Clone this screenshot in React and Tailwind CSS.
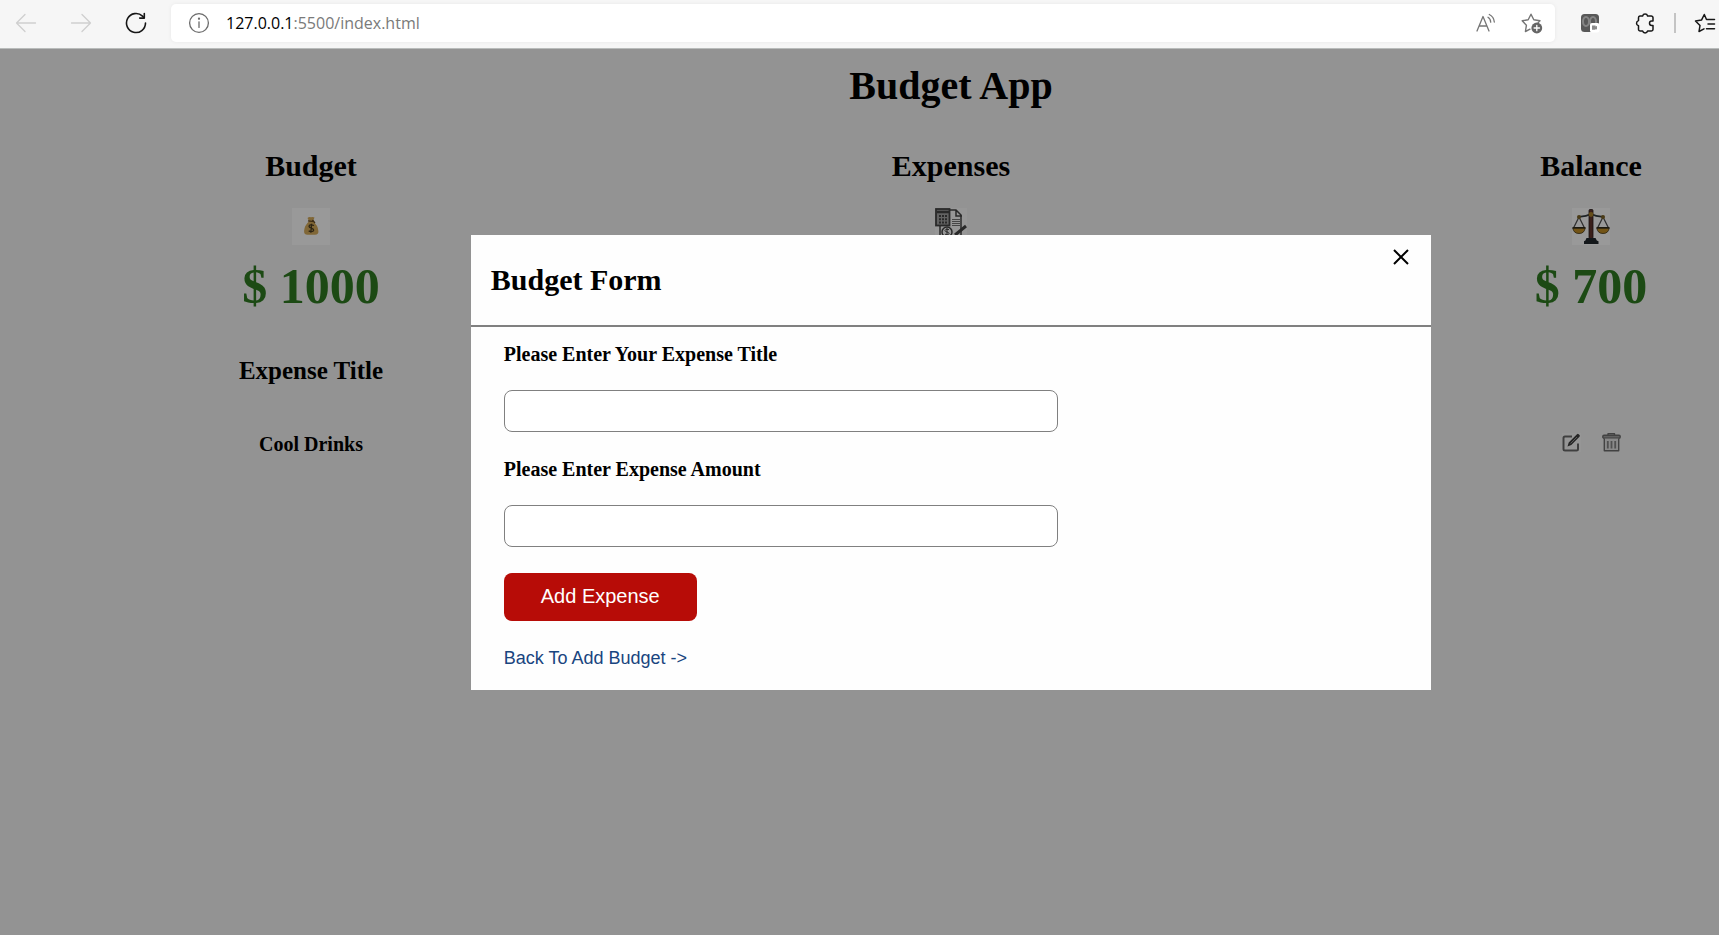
function BackIcon() {
  return (
    <svg viewBox="0 0 22 22" className="h-[22px] w-[22px]" fill="none" stroke="currentColor" strokeWidth="1.3" strokeLinecap="round" strokeLinejoin="round">
      <path d="M20.5 11H1.5M10 2.5L1.5 11l8.500 8.500" />
    </svg>
  );
}

function ForwardIcon() {
  return (
    <svg viewBox="0 0 22 22" className="h-[22px] w-[22px]" fill="none" stroke="currentColor" strokeWidth="1.3" strokeLinecap="round" strokeLinejoin="round">
      <path d="M1.500 11h19M12 2.500l8.500 8.500-8.500 8.500" />
    </svg>
  );
}

function ReloadIcon() {
  return (
    <svg viewBox="0 0 22 22" className="h-[22px] w-[22px]" fill="none" stroke="currentColor" strokeWidth="1.600" strokeLinecap="round" strokeLinejoin="round">
      <path d="M20.500 11A9.500 9.500 0 1 1 17.500 4.100L19 5.800" />
      <path d="M19.300 1.500v4.600h-4.600" />
    </svg>
  );
}

function InfoIcon() {
  return (
    <svg viewBox="0 0 22 22" className="h-[22px] w-[22px] shrink-0" fill="none" stroke="#6b6b6b" strokeWidth="1.300" strokeLinecap="round">
      <circle cx="11" cy="11" r="9.400" />
      <path d="M11 9.800v5.600" />
      <circle cx="11" cy="6.700" r="0.500" fill="#6b6b6b" />
    </svg>
  );
}

function ReadAloudIcon() {
  return (
    <svg viewBox="0 0 22 22" className="h-[22px] w-[22px]" fill="none" stroke="#757575" strokeWidth="1.300" strokeLinecap="round" strokeLinejoin="round">
      <path d="M2 19L8 4.500 14 19M4.200 14h7.700" />
      <path d="M13 5.200q2.600 1.500 2.700 5M14.300 2.500q4.600 2.300 5 7.500" />
    </svg>
  );
}

function FavoriteAddIcon() {
  return (
    <svg viewBox="0 0 22 22" className="h-[22px] w-[22px]" fill="none" stroke="#757575" strokeWidth="1.400" strokeLinejoin="round" strokeLinecap="round">
      <path d="M9 17.200l-4.600 2.300 1-6.200L1.200 8.700l6-.9L10 2.200l2.800 5.600 6.200.9-1.800 1.900" />
      <circle cx="15.800" cy="16" r="5.400" fill="#666" stroke="none" />
      <path d="M15.800 13.300v5.400M13.100 16h5.400" stroke="#fff" strokeWidth="1.300" />
    </svg>
  );
}

function ExtensionBadgeIcon() {
  return (
    <svg viewBox="0 0 20 20" className="h-5 w-5">
      <rect x="1" y="1" width="18" height="18" rx="3.500" fill="#585858" />
      <ellipse cx="6" cy="8.500" rx="3" ry="4.500" fill="none" stroke="#858585" strokeWidth="2" />
      <ellipse cx="13" cy="8.500" rx="3" ry="4.500" fill="none" stroke="#858585" strokeWidth="2" />
      <rect x="10" y="10" width="9.500" height="9.500" rx="2" fill="#fff" />
      <path d="M12 12.500h3.500v1l1.500-.6v3.600l-1.500-.6v.8H12z" fill="#8a8a8a" />
    </svg>
  );
}

function PuzzleIcon() {
  return (
    <svg viewBox="0 0 22 22" className="h-[22px] w-[22px]" fill="none" stroke="#171717" strokeWidth="1.500" strokeLinejoin="round">
      <path d="M6 4h2.600a2.600 2.600 0 0 1 5 0h3.600A1.800 1.800 0 0 1 19 5.800V9h-1.300a2.200 2.200 0 0 0 0 4.400H19v3.800a1.800 1.800 0 0 1-1.800 1.800h-3.600a2.600 2.600 0 0 1-5 0H6.300a1.800 1.800 0 0 1-1.800-1.800v-3.400a2.700 2.700 0 0 1 0-5.200V5.800A1.800 1.800 0 0 1 6 4z" />
    </svg>
  );
}

function FavoritesIcon() {
  return (
    <svg viewBox="0 0 22 22" className="h-[22px] w-[22px]" fill="none" stroke="#171717" strokeWidth="1.500" strokeLinejoin="round" strokeLinecap="round">
      <path d="M10 16.800l-5 2.700 1-6L1.500 9l6-.9L10.300 2.500 12.500 7.500H20.500M14 12h6.500M12.500 16.800h8" />
    </svg>
  );
}

function MoneyBagIcon() {
  return (
    <svg viewBox="0 0 38 37" className="h-[37px] w-[38px]">
      <rect width="38" height="37" fill="#fff" />
      <path d="M15.500 10q1.500-1.500 3.500-.7 2-.8 3.500.2l-1.500 3.800q5 4.200 5.400 9.700.3 3.800-3.400 3.800h-7.500q-3.800 0-3.400-4 .5-5.500 5-9.500z" fill="#d6ac5c" />
      <path d="M16 12.800l6 .8M20.500 12l2.500 3" stroke="#684c25" strokeWidth="1.200" />
      <path d="M22 17.500q-4.500-1.500-5 .8c0 2.200 5 1.500 4.700 3.800-.4 2-4 1.600-5 .6M19.600 15.800l-.8 9" fill="none" stroke="#4a3d22" strokeWidth="1.300" />
    </svg>
  );
}

function CalculatorIcon() {
  return (
    <svg viewBox="0 0 32 37" className="h-[37px] w-8" fill="none" stroke="#454545">
      <rect width="32" height="37" fill="#fcfcfc" stroke="none" />
      <path d="M5 17v17h21V7l-5-5h-8M21 2v6h6" strokeWidth="1.500" />
      <rect x="1" y="1" width="13.500" height="16.500" fill="#a3a3a3" strokeWidth="1.800" />
      <path d="M2 4h12" strokeWidth="2.500" />
      <path d="M4 8h2M7 8h2M10 8h2M4 11.300h2M7 11.300h2M10 11.300h2M4 14.600h2M7 14.600h2M10 14.600h2" strokeWidth="2" />
      <path d="M17 11.500h9M17 13.500h9M17 15.500h9M17 17.500h9" stroke="#777" strokeWidth="1.200" />
      <circle cx="12" cy="24" r="5" strokeWidth="1.500" />
      <path d="M14 21.500q-4-1-4 1c0 2 4 1 4 3 0 1.500-3 1.500-4 .6M12 20v8" strokeWidth="1" />
      <path d="M20 27L31 18" strokeWidth="3" />
    </svg>
  );
}

function ScalesIcon() {
  return (
    <svg viewBox="0 0 38 37" className="h-[37px] w-[38px]">
      <rect width="38" height="37" fill="#fff" />
      <path d="M7 8.500q6 .5 12-2.500 6 3 12 2.500" fill="none" stroke="#333b40" strokeWidth="1.700" />
      <path d="M7 9L1.500 20M7 9l5.500 11M31 9l-5.500 11M31 9l5.500 11" fill="none" stroke="#525252" strokeWidth="1.300" />
      <rect x="17" y="1.500" width="4" height="29" rx="1" fill="#61352c" stroke="#271c1c" strokeWidth="0.800" />
      <circle cx="19" cy="6.500" r="2.400" fill="#a9812c" />
      <circle cx="7" cy="9" r="2" fill="#7d6427" />
      <circle cx="31" cy="9" r="2" fill="#7d6427" />
      <path d="M.8 20h12.400q-.8 5.500-6.200 5.500T.8 20zM24.800 20h12.400q-.8 5.500-6.200 5.500T24.800 20z" fill="#c08c25" stroke="#433719" strokeWidth="0.800" />
      <path d="M.5 19.700h13M24.500 19.700h13" stroke="#302a1b" strokeWidth="1.600" />
      <path d="M14.500 30h9l1.300 2.500 1.700.8V36H12v-2.700l1.400-.8z" fill="#22282e" />
    </svg>
  );
}

function EditIcon() {
  return (
    <svg viewBox="0 0 19 19" className="h-[19px] w-[19px]" fill="none" stroke="#6a6a6a" strokeWidth="2">
      <rect width="19" height="19" fill="#fafafa" stroke="none" />
      <path d="M10 3.500H3Q1.500 3.500 1.500 5v11q0 1.500 1.500 1.500h11.500q1.500 0 1.500-1.500v-5.500" />
      <path d="M5.500 13.500l1.200-4L15 1.200q.8-.8 1.700 0l.8.8q.8.900 0 1.700L9.300 12z" fill="#404040" stroke="none" />
      <path d="M8.500 10.500L15 4" stroke="#999" strokeWidth="1" />
    </svg>
  );
}

function TrashIcon() {
  return (
    <svg viewBox="0 0 19 19" className="h-[19px] w-[19px]" fill="none" stroke="#6f6f6f" strokeWidth="1.400" strokeLinejoin="round">
      <path d="M6 2.200V.8h6.500v1.400" />
      <rect x="0.800" y="2.200" width="17.400" height="3" rx="1.200" fill="#a2a2a2" />
      <path d="M2.300 5.500v12.200h14.400V5.500" fill="#e4e4e4" />
      <path d="M5.800 8v7.500M9.500 8v7.500M13.200 8v7.500" stroke="#858585" strokeWidth="1.800" />
    </svg>
  );
}

function CloseIcon() {
  return (
    <svg viewBox="0 0 16 16" className="h-4 w-4" fill="none" stroke="#000" strokeWidth="2">
      <path d="M1 1l14 14M15 1L1 15" />
    </svg>
  );
}

function BrowserBar() {
  return (
    <header className="flex h-[49px] shrink-0 items-center overflow-hidden border-b border-[#b9bcbb] bg-[#f6f6f6] pb-0.5">
      <div className="flex shrink-0 items-center gap-[33px] pr-6 pl-[15px]">
        <button aria-label="Back" className="text-[#cfcfcf]"><BackIcon /></button>
        <button aria-label="Forward" className="text-[#cfcfcf]"><ForwardIcon /></button>
        <button aria-label="Reload" className="text-[#171717]"><ReloadIcon /></button>
      </div>
      <div className="flex h-[38px] min-w-0 flex-1 items-center rounded-[5px] bg-white pr-3 pl-[17px] shadow-[0_0_4px_rgba(0,0,0,0.06)]">
        <InfoIcon />
        <p className="ml-4 flex-1 font-['Open_Sans',sans-serif] text-[16px] leading-6 text-[#7a7a7a]">
          <span className="text-black">127.0.0.1</span>:5500/index.html
        </p>
        <div className="flex items-center gap-6">
          <button aria-label="Read aloud"><ReadAloudIcon /></button>
          <button aria-label="Add to favorites"><FavoriteAddIcon /></button>
        </div>
      </div>
      <div className="flex shrink-0 items-center pr-[3px] pl-[25px]">
        <button aria-label="Extension"><ExtensionBadgeIcon /></button>
        <button aria-label="Extensions" className="ml-[34px]"><PuzzleIcon /></button>
        <div className="ml-[18px] h-5 w-0.5 bg-[#c4c4c4]" />
        <button aria-label="Favorites" className="ml-[18px]"><FavoritesIcon /></button>
      </div>
    </header>
  );
}

function Summary({ title, amount, children }) {
  return (
    <section className="flex flex-col items-center">
      <h2 className="text-[30px] leading-[34px] font-bold">{title}</h2>
      <div className="mt-[25px]">{children}</div>
      {amount && <p className="mt-[13px] text-[50px] leading-[56px] font-bold text-[#307c22]">{amount}</p>}
    </section>
  );
}

function Field({ id, label }) {
  return (
    <div className="flex flex-col">
      <label htmlFor={id} className="text-[20px] leading-6 font-bold">{label}</label>
      <input id={id} type="text" className="mt-6 h-[42px] w-[62%] rounded-lg border border-[#808080] bg-white px-3 font-['Liberation_Sans',sans-serif] text-base" />
    </div>
  );
}

function BudgetForm() {
  return (
    <div role="dialog" aria-labelledby="form-title" className="w-[50.5%] bg-[#fefefe]">
      <div className="flex items-start justify-between border-b-2 border-[#808080] pr-[22px] pb-7 pl-5">
        <h2 id="form-title" className="mt-7 text-[30px] leading-[34px] font-bold">Budget Form</h2>
        <button aria-label="Close" className="mt-[14px]"><CloseIcon /></button>
      </div>
      <form className="flex flex-col px-[33px] pt-[15px] pb-[21px]" onSubmit={(e) => e.preventDefault()}>
        <div className="flex flex-col gap-[25px]">
          <Field id="expense-title" label="Please Enter Your Expense Title" />
          <Field id="expense-amount" label="Please Enter Expense Amount" />
        </div>
        <button type="submit" className="mt-[26px] h-12 w-[193px] rounded-lg bg-[#b70c07] pb-0.5 font-['Liberation_Sans',sans-serif] text-[20px] leading-6 text-white">Add Expense</button>
        <a href="#budget" className="mt-[26px] self-start font-['Liberation_Sans',sans-serif] text-[18px] leading-[22px] text-[#19457f]">{"Back To Add Budget ->"}</a>
      </form>
    </div>
  );
}

export default function App() {
  return (
    <div className="flex min-h-screen flex-col overflow-hidden font-['Liberation_Serif',serif] text-black">
      <BrowserBar />
      <div className="relative w-[110.65%] flex-1 bg-[#f5f5f5]">
        <main className="pt-[14px]">
          <h1 className="text-center text-[40px] leading-[46px] font-bold">Budget App</h1>
          <div className="mt-10 grid grid-cols-[622fr_658fr_622fr]">
            <Summary title="Budget" amount="$ 1000"><MoneyBagIcon /></Summary>
            <Summary title="Expenses"><CalculatorIcon /></Summary>
            <Summary title="Balance" amount="$ 700"><ScalesIcon /></Summary>
          </div>
          <div className="mt-[43px] grid grid-cols-[622fr_658fr_622fr]">
            <section className="text-center font-bold">
              <h3 className="text-[25px] leading-7">Expense Title</h3>
              <p className="mt-[47px] text-[20px] leading-6">Cool Drinks</p>
            </section>
            <div className="col-start-3 flex items-end justify-center gap-[21px] pb-1">
              <button aria-label="Edit"><EditIcon /></button>
              <button aria-label="Delete"><TrashIcon /></button>
            </div>
          </div>
        </main>
        <div className="absolute inset-0 flex items-start justify-center bg-black/40 pt-[186px]">
          <BudgetForm />
        </div>
      </div>
    </div>
  );
}
